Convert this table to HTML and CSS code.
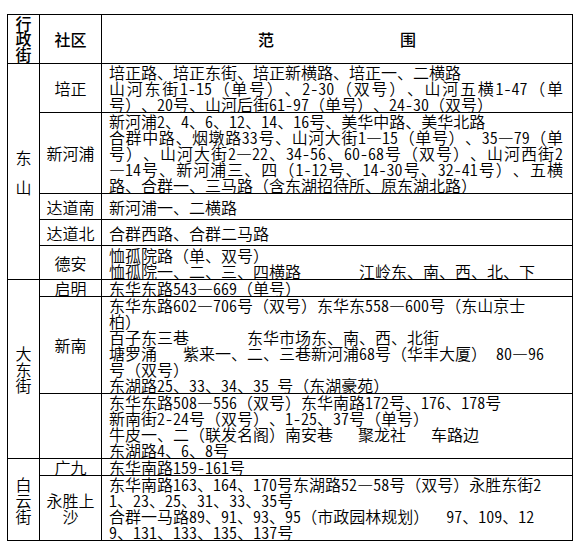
FILE: index.html
```html
<!DOCTYPE html>
<html lang="zh-CN">
<head>
<meta charset="utf-8">
<title>行政街社区范围</title>
<link rel="stylesheet" href="styles.css">
</head>
<body>
<table class="grid">
  <colgroup><col class="c1"><col class="c2"><col class="c3"></colgroup>
  <thead>
    <tr class="head">
      <th class="street"><div class="hs">行<br>政<br>街</div></th>
      <th class="comm">社区</th>
      <th class="range"><span class="fan">范</span><span>围</span></th>
    </tr>
  </thead>
  <tbody>
    <tr>
      <td rowspan="5" class="street"><div class="ds">东<br>山</div></td>
      <td class="comm">培正</td>
      <td class="txt">
        <div>培正路、培正东街、培正新横路、培正一、二横路</div>
        <div class="j">山河东街<span class="n">1-15</span>（单号）、<span class="n">2-30</span>（双号）、山河五横<span class="n">1-47</span>（单</div>
        <div>号）、<span class="n">20</span>号、山河后街<span class="n">61-97</span>（单号）、<span class="n">24-30</span>（双号）</div>
      </td>
    </tr>
    <tr>
      <td class="comm">新河浦</td>
      <td class="txt">
        <div>新河浦<span class="n">2</span>、<span class="n">4</span>、<span class="n">6</span>、<span class="n">12</span>、<span class="n">14</span>、<span class="n">16</span>号、美华中路、美华北路</div>
        <div class="j">合群中路、烟墩路<span class="n">33</span>号、山河大街<span class="n">1</span>—<span class="n">15</span>（单号）、<span class="n">35</span>—<span class="n">79</span>（单</div>
        <div class="j">号）、山河大街<span class="n">2</span>—<span class="n">22</span>、<span class="n">34-56</span>、<span class="n">60-68</span>号（双号）、山河西街<span class="n">2</span></div>
        <div class="j">—<span class="n">14</span>号、新河浦三、四（<span class="n">1-12</span>号、<span class="n">14-30</span>号、<span class="n">32-41</span>号）、五横</div>
        <div>路、合群一、三马路（含东湖招待所、原东湖北路）</div>
      </td>
    </tr>
    <tr class="r26">
      <td class="comm">达道南</td>
      <td class="txt"><div>新河浦一、二横路</div></td>
    </tr>
    <tr class="r26">
      <td class="comm">达道北</td>
      <td class="txt"><div>合群西路、合群二马路</div></td>
    </tr>
    <tr class="r34">
      <td class="comm">德安</td>
      <td class="txt">
        <div>恤孤院路（单、双号）</div>
        <div>恤孤院一、二、三、四横路<span class="g58">江岭东、南、西、北、下</span></div>
      </td>
    </tr>
    <tr>
      <td rowspan="3" class="street">大<br>东<br>街</td>
      <td class="comm">启明</td>
      <td class="txt"><div>东华东路<span class="n">543</span>—<span class="n">669</span>（单号）</div></td>
    </tr>
    <tr>
      <td class="comm">新南</td>
      <td class="txt">
        <div>东华东路<span class="n">602</span>—<span class="n">706</span>号（双号）东华东<span class="n">558</span>—<span class="n">600</span>号（东山京士</div>
        <div>柏）</div>
        <div>百子东三巷<span class="g58">东华市场东、南、西、北街</span></div>
        <div>塘罗涌<span class="g26">紫来一、二、三巷新河浦<span class="n">68</span>号（华丰大厦）</span><span class="g9"><span class="n">80</span>—<span class="n">96</span></span></div>
        <div>号（双号）</div>
        <div>东湖路<span class="n">25</span>、<span class="n">33</span>、<span class="n">34</span>、<span class="n">35</span><span class="g8">号（东湖豪苑）</span></div>
      </td>
    </tr>
    <tr>
      <td class="comm"></td>
      <td class="txt">
        <div>东华东路<span class="n">508</span>—<span class="n">556</span>（双号）东华南路<span class="n">172</span>号、<span class="n">176</span>、<span class="n">178</span>号</div>
        <div>新南街<span class="n">2-24</span>号（双号）、<span class="n">1-25</span>、<span class="n">37</span>号（单号）</div>
        <div>牛皮一、二（联发名阁）南安巷<span class="g25">聚龙社</span><span class="g25">车路边</span></div>
        <div>东湖路<span class="n">4</span>、<span class="n">6</span>、<span class="n">8</span>号</div>
      </td>
    </tr>
    <tr>
      <td rowspan="2" class="street">白<br>云<br>街</td>
      <td class="comm">广九</td>
      <td class="txt"><div>东华南路<span class="n">159-161</span>号</div></td>
    </tr>
    <tr>
      <td class="comm">永胜上<br>沙</td>
      <td class="txt">
        <div>东华南路<span class="n">163</span>、<span class="n">164</span>、<span class="n">170</span>号东湖路<span class="n">52</span>—<span class="n">58</span>号（双号）永胜东街<span class="n">2</span></div>
        <div><span class="n">1</span>、<span class="n">23</span>、<span class="n">25</span>、<span class="n">31</span>、<span class="n">33</span>、<span class="n">35</span>号</div>
        <div>合群一马路<span class="n">89</span>、<span class="n">91</span>、<span class="n">93</span>、<span class="n">95</span>（市政园林规划）<span class="g17"><span class="n">97</span>、<span class="n">109</span>、<span class="n">12</span></span></div>
        <div><span class="n">9</span>、<span class="n">131</span>、<span class="n">133</span>、<span class="n">135</span>、<span class="n">137</span>号</div>
      </td>
    </tr>
  </tbody>
</table>
</body>
</html>
```

FILE: styles.css
```css
html, body {
  margin: 0;
  background: #ffffff;
}

body {
  padding: 14px 0 0 7px;
  font-family: "Noto Sans CJK SC", "Noto Sans CJK JP", sans-serif;
  font-size: 16px;
  font-weight: 350;
  color: #000000;
}

.grid {
  border-collapse: collapse;
  table-layout: fixed;
  width: 565px;
  text-spacing-trim: space-all;
}

.c1 { width: 32px; }
.c2 { width: 62px; }
.c3 { width: 471px; }

.grid th,
.grid td {
  border: 1px solid #000000;
  padding: 0;
  vertical-align: middle;
  line-height: 16px;
  text-align: center;
}

.grid th {
  font-weight: 500;
}

.head th {
  height: 48px;
}

.hs {
  line-height: 15.5px;
}

.street {
  padding: 0;
}

.ds {
  line-height: 30px;
}

.comm {
  padding-right: 2px;
}

.range .fan {
  margin-right: 126px;
}

.txt {
  text-align: left !important;
  padding: 0 9px 0 7px !important;
}

.txt div {
  white-space: nowrap;
}

.txt .j {
  text-align: justify;
  text-align-last: justify;
}

.n {
  font-feature-settings: "hwid" 1;
}

.r26 td {
  height: 25px;
}

.r34 td {
  height: 33px;
}

.g58 { margin-left: 58px; }
.g26 { margin-left: 26px; }
.g25 { margin-left: 25px; }
.g17 { margin-left: 17px; }
.g9 { margin-left: 9px; }
.g8 { margin-left: 8px; }
```
